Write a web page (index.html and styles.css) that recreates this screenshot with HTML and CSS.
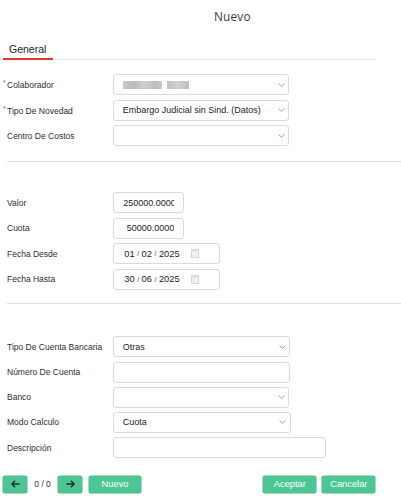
FILE: index.html
```html
<!DOCTYPE html>
<html lang="es">
<head>
<meta charset="utf-8">
<title>Nuevo</title>
<link rel="stylesheet" href="styles.css">
</head>
<body>
<div class="page">
  <div class="title">Nuevo</div>
  <div class="tabs"><div class="tab">General</div></div>

  <div class="section s1">
    <div class="row">
      <span class="lbl req">Colaborador</span>
      <div class="field select w-sel">
        <span class="blur"><i class="b1"></i><i class="b2"></i></span>
        <svg class="chev" width="7" height="4" viewBox="0 0 7 4"><polyline points="0.5,0.5 3.5,3.3 6.5,0.5" fill="none" stroke="#7ea5d8" stroke-width="1"/></svg>
      </div>
    </div>
    <div class="row">
      <span class="lbl req">Tipo De Novedad</span>
      <div class="field select w-sel">
        <span class="val">Embargo Judicial sin Sind. (Datos)</span>
        <svg class="chev" width="7" height="4" viewBox="0 0 7 4"><polyline points="0.5,0.5 3.5,3.3 6.5,0.5" fill="none" stroke="#7ea5d8" stroke-width="1"/></svg>
      </div>
    </div>
    <div class="row">
      <span class="lbl">Centro De Costos</span>
      <div class="field select w-sel">
        <span class="val"></span>
        <svg class="chev" width="7" height="4" viewBox="0 0 7 4"><polyline points="0.5,0.5 3.5,3.3 6.5,0.5" fill="none" stroke="#7ea5d8" stroke-width="1"/></svg>
      </div>
    </div>
  </div>

  <div class="divider d1"></div>

  <div class="section s2">
    <div class="row">
      <span class="lbl">Valor</span>
      <div class="field num w-num"><span class="numval">250000.0000</span></div>
    </div>
    <div class="row">
      <span class="lbl">Cuota</span>
      <div class="field num w-num"><span class="numval">50000.0000</span></div>
    </div>
    <div class="row">
      <span class="lbl">Fecha Desde</span>
      <div class="field date w-date">
        <span class="dpart">01</span><span class="dsep">/</span><span class="dpart">02</span><span class="dsep">/</span><span class="dpart">2025</span>
        <svg class="cal" width="8" height="9" viewBox="0 0 8 9"><rect x="0.5" y="0.5" width="7" height="8" fill="#f4f4f4" stroke="#d2d2d2"/><rect x="0.5" y="0.5" width="7" height="2" fill="#dcdcdc"/><path d="M2 4.5h1M4.5 4.5h1M2 6.5h1M4.5 6.5h1" stroke="#e2e2e2"/></svg>
      </div>
    </div>
    <div class="row">
      <span class="lbl">Fecha Hasta</span>
      <div class="field date w-date">
        <span class="dpart">30</span><span class="dsep">/</span><span class="dpart">06</span><span class="dsep">/</span><span class="dpart">2025</span>
        <svg class="cal" width="8" height="9" viewBox="0 0 8 9"><rect x="0.5" y="0.5" width="7" height="8" fill="#f4f4f4" stroke="#d2d2d2"/><rect x="0.5" y="0.5" width="7" height="2" fill="#dcdcdc"/><path d="M2 4.5h1M4.5 4.5h1M2 6.5h1M4.5 6.5h1" stroke="#e2e2e2"/></svg>
      </div>
    </div>
  </div>

  <div class="divider d2"></div>

  <div class="section s3">
    <div class="row">
      <span class="lbl">Tipo De Cuenta Bancaria</span>
      <div class="field select w-sel2">
        <span class="val">Otras</span>
        <svg class="chev" width="7" height="4" viewBox="0 0 7 4"><polyline points="0.5,0.5 3.5,3.3 6.5,0.5" fill="none" stroke="#7ea5d8" stroke-width="1"/></svg>
      </div>
    </div>
    <div class="row">
      <span class="lbl">Número De Cuenta</span>
      <div class="field w-sel2"></div>
    </div>
    <div class="row">
      <span class="lbl">Banco</span>
      <div class="field select w-sel">
        <span class="val"></span>
        <svg class="chev" width="7" height="4" viewBox="0 0 7 4"><polyline points="0.5,0.5 3.5,3.3 6.5,0.5" fill="none" stroke="#7ea5d8" stroke-width="1"/></svg>
      </div>
    </div>
    <div class="row">
      <span class="lbl">Modo Calculo</span>
      <div class="field select w-sel3">
        <span class="val">Cuota</span>
        <svg class="chev" width="7" height="4" viewBox="0 0 7 4"><polyline points="0.5,0.5 3.5,3.3 6.5,0.5" fill="none" stroke="#7ea5d8" stroke-width="1"/></svg>
      </div>
    </div>
    <div class="row">
      <span class="lbl">Descripción</span>
      <div class="field w-desc"></div>
    </div>
  </div>

  <div class="actions">
    <div class="group">
      <button class="btn icon" type="button"><svg width="9" height="8" viewBox="0 0 9 8"><path d="M8.5 4H1M4 0.8L0.9 4L4 7.2" fill="none" stroke="#1f2a24" stroke-width="1.3"/></svg></button>
      <span class="count">0 / 0</span>
      <button class="btn icon" type="button"><svg width="9" height="8" viewBox="0 0 9 8"><path d="M0.5 4H8M5 0.8L8.1 4L5 7.2" fill="none" stroke="#1f2a24" stroke-width="1.3"/></svg></button>
      <button class="btn text nuevo" type="button">Nuevo</button>
    </div>
    <div class="group right">
      <button class="btn text" type="button">Aceptar</button>
      <button class="btn text" type="button">Cancelar</button>
    </div>
  </div>
</div>
</body>
</html>
```

FILE: styles.css
```css
* { box-sizing: border-box; }
html, body { margin: 0; padding: 0; background: #fff; }
body {
  font-family: "Liberation Sans", Arial, sans-serif;
  color: #333;
  width: 401px;
  height: 500px;
  overflow: hidden;
}
.page { width: 401px; }

.title {
  height: 32px;
  line-height: 32px;
  padding-left: 214px;
  font-family: "Open Sans", "Noto Sans", sans-serif;
  font-size: 11.8px;
  color: #3a3a3a;
  letter-spacing: 0.2px;
}

.tabs {
  margin: 0 25px 0 3px;
  border-bottom: 1px solid #e4e4e4;
  display: flex;
}
.tab {
  width: 50px;
  padding: 10px 0 2px 6px;
  line-height: 14px;
  font-size: 10.5px;
  color: #222;
  border-bottom: 2px solid #e0372b;
  margin-bottom: -1px;
}

.section { padding-left: 7px; display: flex; flex-direction: column; }
.s1 { margin-top: 14.3px; gap: 4.5px; }
.s2 { margin-top: 30.3px; gap: 4.6px; }
.s3 { margin-top: 32.7px; gap: 4.15px; }

.row { display: flex; align-items: center; height: 21px; }
.lbl {
  width: 106.3px;
  flex: none;
  font-size: 8.5px;
  color: #2e2e2e;
}
.lbl.req::before {
  content: "*";
  display: inline-block;
  width: 4px;
  margin-left: -4px;
  color: #e0372b;
  font-size: 7px;
  vertical-align: 3px;
}

.field {
  height: 21px;
  border: 1px solid #dadada;
  border-radius: 3px;
  background: #fff;
  display: flex;
  align-items: center;
  font-size: 9px;
  color: #222;
  flex: none;
}
.select { padding: 0 3.5px 0 8.5px; }
.select .val { flex: 1; white-space: nowrap; overflow: hidden; }
.chev { flex: none; margin-left: auto; }
.w-sel { width: 176px; }
.w-sel2 { width: 177px; }
.w-sel3 { width: 177.4px; }
.w-desc { width: 212.4px; }
.w-num { width: 71px; }
.w-date { width: 107px; }

.blur { display: flex; gap: 5px; align-items: center; filter: blur(0.7px); }
.blur i { display: block; height: 8px; background: #c4c4c4; }
.blur .b1 { width: 39px; background: linear-gradient(90deg, #c9c9c9, #bcbcbc 30%, #d0d0d0 55%, #bebebe 80%, #c8c8c8); }
.blur .b2 { width: 22px; background: linear-gradient(90deg, #c2c2c2, #d0d0d0 50%, #bfbfbf); }

.num { padding: 0 9px 0 9px; }
.numval {
  display: block;
  width: 100%;
  overflow: hidden;
  white-space: nowrap;
  text-align: right;
  color: #222;
}

.date { padding: 0 0 0 10px; color: #222; }
.dpart { font-size: 9.3px; }
.dsep { font-size: 7px; margin: 0 2.5px; vertical-align: 2px; color: #444; }
.cal { margin-left: 11px; flex: none; }

.divider { margin-left: 7px; height: 1px; background: #dedede; }
.d1 { margin-top: 14.5px; }
.d2 { margin-top: 12.9px; }

.actions {
  margin-top: 17.7px;
  padding: 0 25.7px 0 3.3px;
  display: flex;
  align-items: center;
}
.group { display: flex; align-items: center; }
.group.right { margin-left: auto; gap: 6px; }
.btn {
  height: 17.3px;
  border: none;
  border-radius: 2px;
  background: #4dc694;
  color: #fff;
  font-family: "Liberation Sans", Arial, sans-serif;
  font-size: 9.3px;
  padding: 0;
  display: flex;
  align-items: center;
  justify-content: center;
  box-shadow: 0 0 0 0.5px #45b886;
}
.btn.icon { width: 23.5px; }
.btn.text { width: 53px; }
.btn.nuevo { width: 52.3px; margin-left: 7px; }
.count {
  font-size: 8.5px;
  color: #333;
  width: 31.6px;
  text-align: center;
}
```
